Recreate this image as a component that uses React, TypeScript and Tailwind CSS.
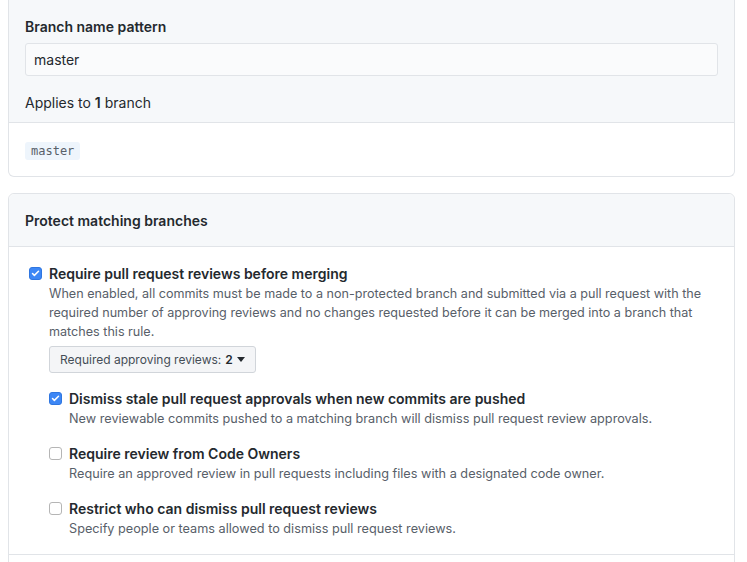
import { Check } from 'lucide-react';

interface RuleOption {
  title: string;
  description: string;
  checked: boolean;
}

const subRules: RuleOption[] = [
  {
    title: 'Dismiss stale pull request approvals when new commits are pushed',
    description: 'New reviewable commits pushed to a matching branch will dismiss pull request review approvals.',
    checked: true,
  },
  {
    title: 'Require review from Code Owners',
    description: 'Require an approved review in pull requests including files with a designated code owner.',
    checked: false,
  },
  {
    title: 'Restrict who can dismiss pull request reviews',
    description: 'Specify people or teams allowed to dismiss pull request reviews.',
    checked: false,
  },
];

function Checkbox({ checked }: { checked: boolean }) {
  if (checked) {
    return (
      <span className="mt-[3px] flex h-[13px] w-[13px] shrink-0 items-center justify-center rounded-[3px] bg-[#3d87f5] border border-[#2f76e0]">
        <Check className="text-white" size={9} strokeWidth={4} />
      </span>
    );
  }
  return <span className="mt-[3px] h-[13px] w-[13px] shrink-0 rounded-[3px] border border-[#b5b5b5] bg-white" />;
}

function Rule({ rule }: { rule: RuleOption }) {
  return (
    <div className="flex gap-[7px]">
      <Checkbox checked={rule.checked} />
      <div>
        <div className="text-[14px] leading-[20px] font-semibold text-[#24292e]">{rule.title}</div>
        <p className="text-[12.7px] leading-[19px] text-[#586069]">{rule.description}</p>
      </div>
    </div>
  );
}

export default function App() {
  return (
    <div className="min-h-screen bg-white pl-2 pr-3 text-[#24292e]" style={{ fontFamily: 'Inter, "Liberation Sans", sans-serif' }}>
      <div className="rounded-b-md border-x border-b border-[#e1e4e8]">
        <div className="bg-[#f6f8fa] px-4 pt-[17px] pb-[9px] border-b border-[#e1e4e8]">
          <label className="block text-[14px] leading-[20px] font-semibold">Branch name pattern</label>
          <div className="mt-1.5 h-[33px] rounded-[3px] border border-[#e1e4e8] bg-[#fafbfc] px-2 text-[14px] leading-[31px]">
            master
          </div>
          <p className="mt-[17px] text-[14px] leading-[20px]">
            Applies to <span className="font-semibold">1</span> branch
          </p>
        </div>
        <div className="flex px-4 pt-[19px] pb-[16px]">
          <code
            className="block rounded-[3px] bg-[#eef5fc] px-[6px] text-[12px] leading-[18px] text-[#586069]"
            style={{ fontFamily: '"DejaVu Sans Mono", monospace' }}
          >
            master
          </code>
        </div>
      </div>

      <div className="mt-[16px] rounded-md border border-[#e1e4e8]">
        <div className="flex h-[53px] items-center border-b border-[#e1e4e8] bg-[#f6f8fa] px-4 rounded-t-md">
          <h3 className="text-[14px] font-semibold">Protect matching branches</h3>
        </div>
        <div className="pl-5 pr-0 pt-[17px] pb-4">
          <div className="flex gap-[7px]">
            <Checkbox checked />
            <div>
              <div className="text-[14px] leading-[20px] font-semibold">Require pull request reviews before merging</div>
              <p className="text-[12.6px] leading-[19px] text-[#586069]">
                When enabled, all commits must be made to a non-protected branch and submitted via a pull request with the
                required number of approving reviews and no changes requested before it can be merged into a branch that
                matches this rule.
              </p>
              <button className="mt-[5px] flex h-[27px] items-center gap-1 rounded-[3px] border border-[#d1d5da] bg-[#f4f5f7] px-[10px] text-[12px] text-[#444d56]">
                Required approving reviews: <span className="font-semibold text-[#24292e]">2</span>
                <svg width="8" height="5" viewBox="0 0 8 5">
                  <path d="M0 0h8L4 5z" fill="#24292e" />
                </svg>
              </button>
              <div className="mt-4 flex flex-col gap-4">
                {subRules.map((rule) => (
                  <Rule key={rule.title} rule={rule} />
                ))}
              </div>
            </div>
          </div>
        </div>
        <div className="h-4 border-t border-[#e1e4e8]" />
      </div>
    </div>
  );
}
